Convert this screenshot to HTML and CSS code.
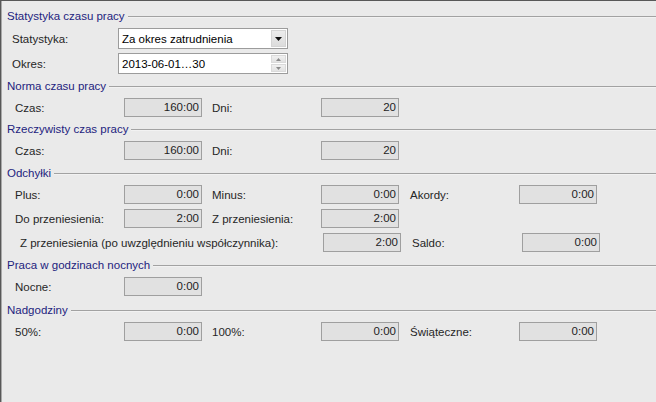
FILE: index.html
```html
<!DOCTYPE html>
<html lang="pl">
<head>
<meta charset="utf-8">
<title>Statystyka czasu pracy</title>
<link rel="stylesheet" href="styles.css">
</head>
<body>
<div class="window">
  <section class="group first">
    <div class="gtitle">Statystyka czasu pracy</div>
    <div class="rows tight">
      <div class="frow">
        <span class="flbl">Statystyka:</span>
        <div class="combo">
          <span class="ctext">Za okres zatrudnienia</span>
          <span class="cbtn"><svg width="7" height="4" viewBox="0 0 7 4"><path d="M0 0H7L3.5 4Z" fill="#111"/></svg></span>
        </div>
      </div>
      <div class="frow">
        <span class="flbl">Okres:</span>
        <div class="combo">
          <span class="ctext">2013-06-01…30</span>
          <span class="spin">
            <span class="sbtn"><svg width="5" height="3" viewBox="0 0 5 3"><path d="M2.5 0L5 3H0Z" fill="#8a8a8a"/></svg></span>
            <span class="sbtn"><svg width="5" height="3" viewBox="0 0 5 3"><path d="M0 0H5L2.5 3Z" fill="#8a8a8a"/></svg></span>
          </span>
        </div>
      </div>
    </div>
  </section>

  <section class="group">
    <div class="gtitle">Norma czasu pracy</div>
    <div class="rows">
      <div class="grow">
        <span class="lbl">Czas:</span><span class="box">160:00</span>
        <span class="lbl c2">Dni:</span><span class="box">20</span>
      </div>
    </div>
  </section>

  <section class="group">
    <div class="gtitle">Rzeczywisty czas pracy</div>
    <div class="rows">
      <div class="grow">
        <span class="lbl">Czas:</span><span class="box">160:00</span>
        <span class="lbl c2">Dni:</span><span class="box">20</span>
      </div>
    </div>
  </section>

  <section class="group roomy">
    <div class="gtitle">Odchyłki</div>
    <div class="rows">
      <div class="grow">
        <span class="lbl">Plus:</span><span class="box">0:00</span>
        <span class="lbl c2">Minus:</span><span class="box">0:00</span>
        <span class="lbl c3">Akordy:</span><span class="box">0:00</span>
      </div>
      <div class="grow">
        <span class="lbl">Do przeniesienia:</span><span class="box">2:00</span>
        <span class="lbl c2">Z przeniesienia:</span><span class="box">2:00</span>
      </div>
      <div class="grow wide">
        <span class="lbl">Z przeniesienia (po uwzględnieniu współczynnika):</span><span class="box">2:00</span>
        <span class="lbl c3">Saldo:</span><span class="box">0:00</span>
      </div>
    </div>
  </section>

  <section class="group roomy">
    <div class="gtitle">Praca w godzinach nocnych</div>
    <div class="rows">
      <div class="grow">
        <span class="lbl">Nocne:</span><span class="box">0:00</span>
      </div>
    </div>
  </section>

  <section class="group roomier">
    <div class="gtitle">Nadgodziny</div>
    <div class="rows">
      <div class="grow">
        <span class="lbl">50%:</span><span class="box">0:00</span>
        <span class="lbl c2">100%:</span><span class="box">0:00</span>
        <span class="lbl c3">Świąteczne:</span><span class="box">0:00</span>
      </div>
    </div>
  </section>
</div>
</body>
</html>
```

FILE: styles.css
```css
html, body {
  margin: 0;
  padding: 0;
  background: #eaeaea;
}

.window {
  width: 656px;
  height: 402px;
  box-sizing: border-box;
  background: #eaeaea;
  border-top: 1px solid #585858;
  border-left: 1px solid #585858;
  box-shadow: inset 1px 0 0 #a9a9a9;
  font-family: "Liberation Sans", Arial, sans-serif;
  font-size: 11.5px;
  color: #262626;
  overflow: hidden;
}

.group {
  margin-top: 5px;
}

.group.first {
  margin-top: 8px;
}

.group.roomy {
  margin-top: 6px;
}

.group.roomier {
  margin-top: 7px;
}

.gtitle {
  display: flex;
  align-items: center;
  height: 14px;
  padding-left: 6px;
  color: #23237e;
  white-space: nowrap;
}

.gtitle::after {
  content: "";
  flex: 1;
  height: 1px;
  margin-left: 3px;
  background: #a2a2a2;
  box-shadow: 0 1px 0 #f2f2f2;
}

.rows {
  margin-top: 5px;
  display: flex;
  flex-direction: column;
  gap: 5px;
}

.rows.tight {
  gap: 4px;
}

/* first section rows */
.frow {
  display: flex;
  align-items: center;
  padding-left: 11px;
  height: 21px;
}

.flbl {
  width: 106px;
}

.combo {
  width: 170px;
  height: 21px;
  box-sizing: border-box;
  border: 1px solid #9c9c9c;
  background: #fff;
  display: flex;
  align-items: center;
  color: #000;
}

.ctext {
  flex: 1;
  padding-left: 3px;
}

.cbtn {
  width: 15px;
  height: 17px;
  margin-right: 1px;
  box-sizing: border-box;
  border: 1px solid #d4d4d4;
  background: linear-gradient(#ececec, #dcdcdc);
  display: flex;
  align-items: center;
  justify-content: center;
}

.spin {
  width: 15px;
  height: 17px;
  margin-right: 1px;
  display: flex;
  flex-direction: column;
  gap: 1px;
}

.sbtn {
  flex: 1;
  box-sizing: border-box;
  border: 1px solid #dadada;
  background: linear-gradient(#f0f0f0, #e2e2e2);
  display: flex;
  align-items: center;
  justify-content: center;
}

/* value rows */
.grow {
  display: grid;
  grid-template-columns: 109px 78px 119px 78px 120px 78px;
  align-items: center;
  padding-left: 14px;
  height: 19px;
}

.grow.wide {
  grid-template-columns: 303px 78px 121px 78px;
  padding-left: 19px;
}

.lbl {
  white-space: nowrap;
}

.lbl.c2 {
  padding-left: 10px;
}

.lbl.c3 {
  padding-left: 11px;
}

.box {
  height: 19px;
  box-sizing: border-box;
  border: 1px solid #9f9f9f;
  background: #e1e1e1;
  text-align: right;
  padding-right: 2px;
  line-height: 17px;
  color: #1e1e1e;
}
```
